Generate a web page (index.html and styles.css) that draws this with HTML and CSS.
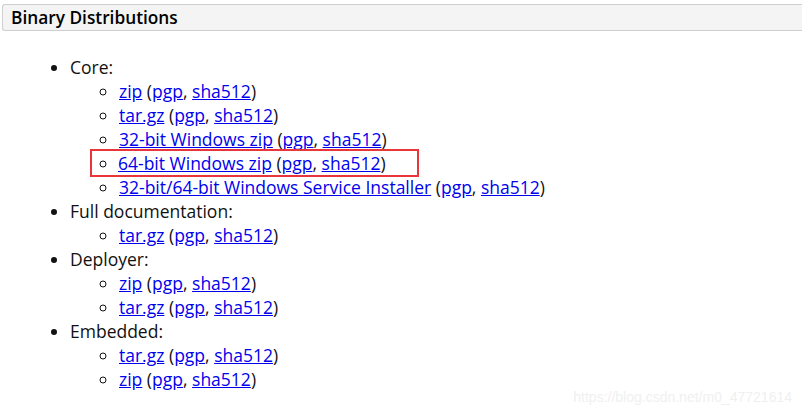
FILE: index.html
```html
<!DOCTYPE html>
<html>
<head>
<meta charset="utf-8">
<link rel="stylesheet" href="styles.css">
</head>
<body>
<div class="section">
  <h3 class="section-title">Binary Distributions</h3>
  <ul class="dist-list">
    <li>Core:
      <ul class="sub-list">
        <li><a href="#">zip</a> (<a href="#">pgp</a>, <a href="#">sha512</a>)</li>
        <li><a href="#">tar.gz</a> (<a href="#">pgp</a>, <a href="#">sha512</a>)</li>
        <li><a href="#">32-bit Windows zip</a> (<a href="#">pgp</a>, <a href="#">sha512</a>)</li>
        <li><span class="highlight"><a href="#">64-bit Windows zip</a> (<a href="#">pgp</a>, <a href="#">sha512</a>)</span></li>
        <li><a href="#">32-bit/64-bit Windows Service Installer</a> (<a href="#">pgp</a>, <a href="#">sha512</a>)</li>
      </ul>
    </li>
    <li>Full documentation:
      <ul class="sub-list">
        <li><a href="#">tar.gz</a> (<a href="#">pgp</a>, <a href="#">sha512</a>)</li>
      </ul>
    </li>
    <li>Deployer:
      <ul class="sub-list">
        <li><a href="#">zip</a> (<a href="#">pgp</a>, <a href="#">sha512</a>)</li>
        <li><a href="#">tar.gz</a> (<a href="#">pgp</a>, <a href="#">sha512</a>)</li>
      </ul>
    </li>
    <li>Embedded:
      <ul class="sub-list">
        <li><a href="#">tar.gz</a> (<a href="#">pgp</a>, <a href="#">sha512</a>)</li>
        <li><a href="#">zip</a> (<a href="#">pgp</a>, <a href="#">sha512</a>)</li>
      </ul>
    </li>
  </ul>
</div>
<div class="watermark">https://blog.csdn.net/m0_47721614</div>
</body>
</html>
```
FILE: styles.css
```css
html, body {
  margin: 0;
  padding: 0;
  background: #fff;
}
body {
  font-family: "Open Sans", "Noto Sans", sans-serif;
  font-size: 17.5px;
  color: #111;
  width: 802px;
  height: 412px;
  overflow: hidden;
  position: relative;
}
.section {
  padding: 4px 0 0 2px;
}
.section-title {
  margin: 0;
  height: 25px;
  line-height: 25px;
  padding: 0 8px;
  font-size: 17.3px;
  font-weight: 600;
  color: #000;
  background: #f4f4f4;
  border: 1px solid #cfcfcf;
  border-right: none;
  border-radius: 3px 0 0 3px;
}
.dist-list {
  margin: 24px 0 0 0;
  padding: 0 0 0 68px;
  list-style: disc;
  line-height: 24px;
}
.sub-list {
  margin: 0;
  padding: 0 0 0 49px;
  list-style: circle;
}
a {
  color: #0000ee;
  text-decoration: underline;
}
.highlight {
  outline: 2px solid #e8363b;
  outline-offset: 0;
  display: inline-block;
  margin-left: -27px;
  padding: 1px 31px 1px 26px;
  line-height: 22px;
}
.watermark {
  position: absolute;
  right: 10px;
  bottom: 7px;
  font-family: "Liberation Sans", Arial, sans-serif;
  font-size: 14px;
  color: #f0f0f0;
}
```
